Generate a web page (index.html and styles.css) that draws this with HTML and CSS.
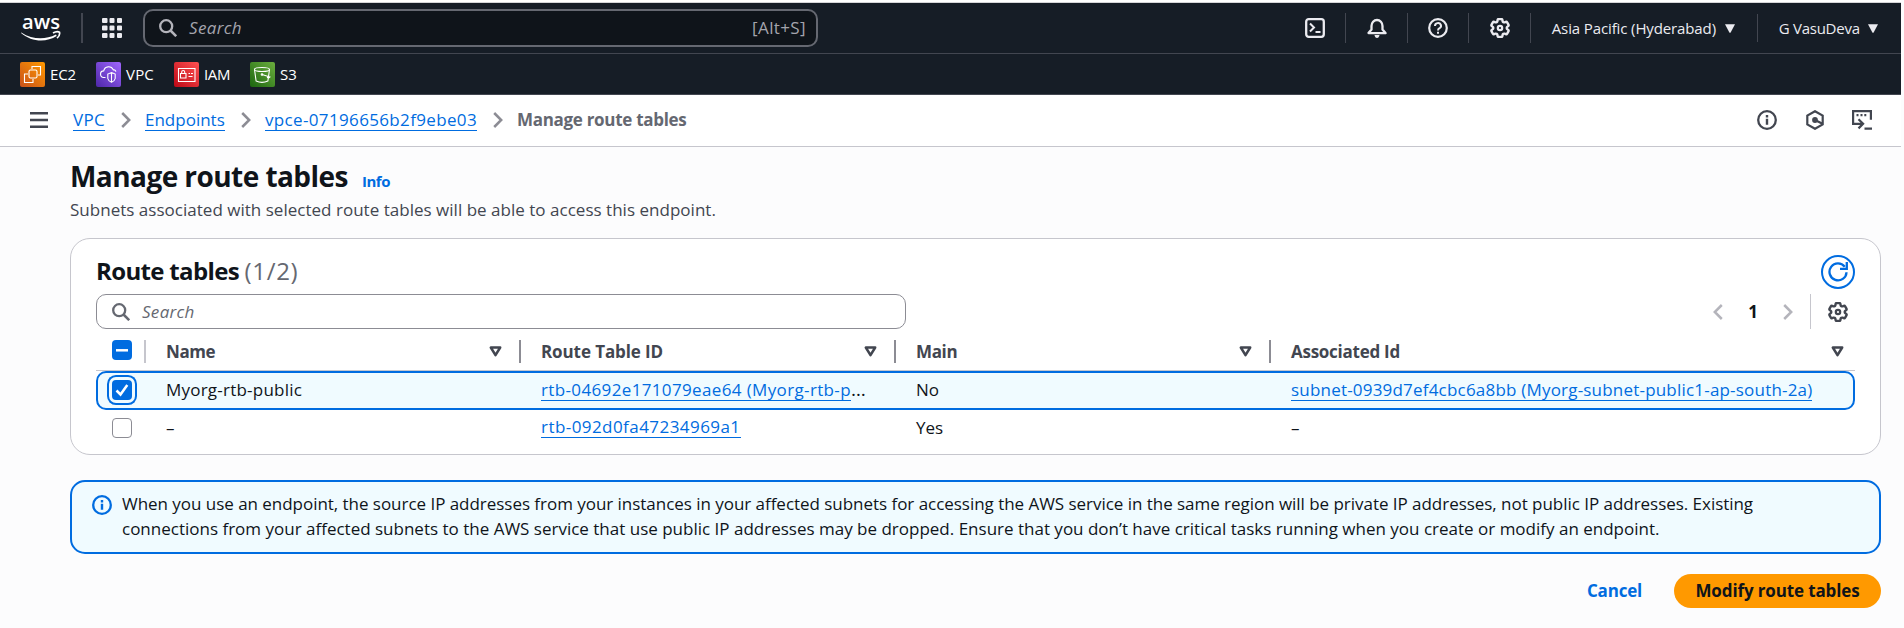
FILE: index.html
```html
<!DOCTYPE html>
<html lang="en">
<head>
<meta charset="utf-8">
<title>Manage route tables</title>
<link rel="stylesheet" href="styles.css">
</head>
<body>
<svg class="defs" width="0" height="0">
  <symbol id="gear" viewBox="2 2 20 20"><path fill="none" stroke="currentColor" stroke-width="2.4" d="M9.594 3.94c.09-.542.56-.94 1.11-.94h2.593c.55 0 1.02.398 1.11.94l.213 1.281c.063.374.313.686.645.87.074.04.147.083.22.127.325.196.72.257 1.075.124l1.217-.456a1.125 1.125 0 0 1 1.37.49l1.296 2.247a1.125 1.125 0 0 1-.26 1.431l-1.003.827c-.293.241-.438.613-.43.992a7.723 7.723 0 0 1 0 .255c-.008.378.137.75.43.991l1.004.827c.424.35.534.955.26 1.43l-1.298 2.247a1.125 1.125 0 0 1-1.369.491l-1.217-.456c-.355-.133-.75-.072-1.076.124a6.47 6.47 0 0 1-.22.128c-.331.183-.581.495-.644.869l-.213 1.281c-.09.543-.56.94-1.11.94h-2.594c-.55 0-1.019-.398-1.11-.94l-.213-1.281c-.062-.374-.312-.686-.644-.87a6.52 6.52 0 0 1-.22-.127c-.325-.196-.72-.257-1.076-.124l-1.217.456a1.125 1.125 0 0 1-1.369-.49l-1.297-2.247a1.125 1.125 0 0 1 .26-1.431l1.004-.827c.292-.24.437-.613.43-.991a6.932 6.932 0 0 1 0-.255c.007-.38-.138-.751-.43-.992l-1.004-.827a1.125 1.125 0 0 1-.26-1.43l1.297-2.247a1.125 1.125 0 0 1 1.37-.491l1.216.456c.356.133.751.072 1.076-.124.072-.044.146-.086.22-.128.332-.183.582-.495.644-.869l.214-1.28Z"/><circle cx="12" cy="12" r="2.2" fill="none" stroke="currentColor" stroke-width="2.2"/></symbol>
  <symbol id="search" viewBox="0 0 18 18"><circle cx="7.2" cy="7.2" r="6" fill="none" stroke="currentColor" stroke-width="2.3"/><path d="M11.5 11.5l5.7 5.7" stroke="currentColor" stroke-width="2.5"/></symbol>
  <symbol id="chev" viewBox="0 0 10 16"><path d="M1.2 1l7 7-7 7" fill="none" stroke="currentColor" stroke-width="2.5"/></symbol>
  <symbol id="info" viewBox="0 0 20 20"><circle cx="10" cy="10" r="8.8" fill="none" stroke="currentColor" stroke-width="2.3"/><path d="M10 8.8v6M10 5v2.4" stroke="currentColor" stroke-width="2.4"/></symbol>
  <symbol id="sort" viewBox="0 0 13 11"><path d="M1.800 1.500h9.400L6.500 9.200z" fill="none" stroke="currentColor" stroke-width="2.500" stroke-linejoin="round"/></symbol>
</svg>
<div class="page">
  <header class="top">
    <svg class="logo" width="40" height="38" viewBox="0 -12 40 38">
      <text x="1" y="13" textLength="38" lengthAdjust="spacingAndGlyphs">aws</text>
      <path d="M.3 16.400c11.500 7.500 24 7.500 34.700 2.100l.7 1.500C25 26.800 10.500 26 0 17z"/>
      <path d="M32 17c2.500-1.500 5.500-1.500 6.500-.8.400 1.800-.7 4.500-2.500 6" fill="none" stroke="#fff" stroke-width="1.700"/>
    </svg>
    <i class="bar bar-wide"></i>
    <svg class="apps" width="20" height="20" viewBox="0 0 20 20"><path d="M0 1q0-1 1-1h3.500q1 0 1 1v3q0 1-1 1H1q-1 0-1-1zM7.500 1q0-1 1-1h3q1 0 1 1v3q0 1-1 1h-3q-1 0-1-1zM15 1q0-1 1-1h3q1 0 1 1v3q0 1-1 1h-3q-1 0-1-1zM0 8.500q0-1 1-1h3.500q1 0 1 1v3q0 1-1 1H1q-1 0-1-1zM7.500 8.500q0-1 1-1h3q1 0 1 1v3q0 1-1 1h-3q-1 0-1-1zM15 8.500q0-1 1-1h3q1 0 1 1v3q0 1-1 1h-3q-1 0-1-1zM0 16q0-1 1-1h3.500q1 0 1 1v3q0 1-1 1H1q-1 0-1-1zM7.500 16q0-1 1-1h3q1 0 1 1v3q0 1-1 1h-3q-1 0-1-1zM15 16q0-1 1-1h3q1 0 1 1v3q0 1-1 1h-3q-1 0-1-1z"/></svg>
    <div class="topsearch"><svg width="18" height="18"><use href="#search"/></svg><em>Search</em><span class="short">[Alt+S]</span></div>
    <div class="tools">
      <svg width="20" height="20" viewBox="0 0 20 20" fill="none" stroke="currentColor" stroke-width="2.300"><rect x="1.200" y="1.200" width="17.600" height="17.600" rx="2.500"/><path d="M5 5.500l4 4-4 4" stroke-width="2"/><path d="M10.500 14h5" stroke-width="2"/></svg>
      <i class="bar"></i>
      <svg width="20" height="20" viewBox="0 0 20 20"><path d="M4.500 8a5.500 6 0 0 1 11 0v3.500l3 3.600h-17l3-3.600z" fill="none" stroke="currentColor" stroke-width="2.300" stroke-linejoin="round"/><path d="M7.500 17h5q-.5 3-2.500 3t-2.500-3z" fill="currentColor"/></svg>
      <i class="bar"></i>
      <svg width="20" height="20" viewBox="0 0 20 20" fill="none" stroke="currentColor" stroke-width="2.200"><circle cx="10" cy="10" r="8.800"/><path d="M7 8a3 2.800 0 1 1 4.600 2.200Q10 11 10 12.500M10 13.800v2" stroke-width="2"/></svg>
      <i class="bar"></i>
      <svg width="20" height="20"><use href="#gear"/></svg>
      <i class="bar"></i>
    </div>
    <span class="region">Asia Pacific (Hyderabad)</span><svg class="caret" width="10" height="9"><path d="M0 .3h10L5.500 8.700h-1z"/></svg>
    <i class="bar bar-user"></i>
    <span class="user">G VasuDeva</span><svg class="caret" width="10" height="9"><path d="M0 .3h10L5.500 8.700h-1z"/></svg>
  </header>
  <nav class="favs">
    <a class="fav fav-ec2"><svg class="ec2" width="25" height="25" viewBox="0 0 25 25"><rect x="9" y="8" width="8" height="8" rx="1.500"/><path d="M12 7V4.500h8.500v8.500H18M8 12H4.500v8.500H13V17"/></svg><span>EC2</span></a>
    <a class="fav fav-vpc"><svg class="vpc" width="25" height="25" viewBox="0 0 25 25"><path d="M9.500 15.500H8a3.300 3.300 0 0 1-.3-6.600c1-5 7.600-5.500 9.600-1 2-.3 2.400 1 2.500 1.800M15.500 10.500l3.700 1.500v4.500q-.5 2.500-3.700 3.800-3.200-1.300-3.700-3.800V12zM15.500 10.500v9.500"/></svg><span>VPC</span></a>
    <a class="fav fav-iam"><svg class="iam" width="25" height="25" viewBox="0 0 25 25"><path d="M4.500 6.500h16.500v13h-16.500zM6.500 11.500h5.500v4.500h-5.500zM7.700 11.500v-1.500a1.500 1.500 0 0 1 3 0v1.500M14.500 11.500h1.500M17 11.500h2M14.500 14.500h4"/></svg><span>IAM</span></a>
    <a class="fav fav-s3"><svg class="s3" width="25" height="25" viewBox="0 0 25 25"><ellipse cx="12" cy="7.500" rx="7.500" ry="2"/><path d="M4.500 7.500l1.600 11.500q5.900 2.800 11.800 0l1.600-11.500M12 12.500l8 2.500q-1 1.500-3 .2"/><circle cx="12" cy="12.500" r=".8"/></svg><span>S3</span></a>
  </nav>
  <div class="crumbs">
    <svg class="menu" width="18" height="16" viewBox="0 0 18 16"><path d="M0 1.200h18M0 8h18M0 14.800h18" stroke="currentColor" stroke-width="2.400"/></svg>
    <a class="link c1">VPC</a><svg class="sep" width="10" height="16"><use href="#chev"/></svg>
    <a class="link c2">Endpoints</a><svg class="sep" width="10" height="16"><use href="#chev"/></svg>
    <a class="link c3">vpce-07196656b2f9ebe03</a><svg class="sep" width="10" height="16"><use href="#chev"/></svg>
    <b class="here">Manage route tables</b>
    <div class="pagetools">
      <svg width="20" height="20"><use href="#info"/></svg>
      <svg width="20" height="20" viewBox="0 0 20 20"><path d="M10 1.200l7.700 4.400v8.800L10 18.800l-7.700-4.400V5.600z" fill="none" stroke="currentColor" stroke-width="2.200"/><circle cx="10" cy="10" r="2.900" fill="currentColor"/><path d="M10 10l7.500 3.700" stroke="currentColor" stroke-width="2.200"/></svg>
      <svg width="20" height="20" viewBox="0 0 20 20" fill="none" stroke="currentColor" stroke-width="2.200"><path d="M4.500 13.800H1.100V1.100h17.800v8.700M4.500 13.800h6M6.500 9.200l4.600 4.600-4.600 4.600M12.500 18.700h7.500"/><path d="M4.500 5.200h2M8.500 5.200h2M12.300 5.200h2"/></svg>
    </div>
  </div>
  <main class="main">
    <div class="title"><h1>Manage route tables</h1><a class="infolink">Info</a></div>
    <p class="desc">Subnets associated with selected route tables will be able to access this endpoint.</p>
    <section class="card">
      <div class="cardhead">
        <h2>Route tables <span>(1/2)</span></h2>
        <button class="refresh"><svg width="20" height="20" viewBox="0 0 20 20" fill="none" stroke="currentColor" stroke-width="2.300"><path d="M18.500 10.200A8.500 8.500 0 1 1 16.800 4.800"/><path d="M18.800 0v6.800h-6.800"/></svg></button>
      </div>
      <div class="filters">
        <div class="search"><svg width="18" height="18"><use href="#search"/></svg><em>Search</em></div>
        <div class="pager">
          <svg class="flip" width="10" height="16"><use href="#chev"/></svg><b>1</b><svg width="10" height="16"><use href="#chev"/></svg>
        </div>
        <svg class="prefs" width="20" height="20"><use href="#gear"/></svg>
      </div>
      <div class="row head">
        <div class="pick"><span class="box on"><svg width="20" height="20"><path d="M4 10.300h12" stroke="#fff" stroke-width="2.500"/></svg></span></div>
        <div class="cell"><b class="h-name">Name</b><svg width="13" height="11"><use href="#sort"/></svg></div>
        <div class="cell"><b class="h-id">Route Table ID</b><svg width="13" height="11"><use href="#sort"/></svg></div>
        <div class="cell"><b class="h-main">Main</b><svg width="13" height="11"><use href="#sort"/></svg></div>
        <div class="cell"><b class="h-assoc">Associated Id</b><svg width="13" height="11"><use href="#sort"/></svg></div>
      </div>
      <div class="row selected">
        <div class="pick"><span class="box on focus"><svg width="20" height="20"><path d="M4.500 10.500l4 4L15.300 5" fill="none" stroke="#fff" stroke-width="2.500"/></svg></span></div>
        <div class="cell"><span class="t-name">Myorg-rtb-public</span></div>
        <div class="cell"><a class="link t-rtb1">rtb-04692e171079eae64 (Myorg-rtb-p</a><span class="dots">…</span></div>
        <div class="cell"><span>No</span></div>
        <div class="cell"><a class="link t-sub">subnet-0939d7ef4cbc6a8bb (Myorg-subnet-public1-ap-south-2a)</a></div>
      </div>
      <div class="row last">
        <div class="pick"><span class="box"></span></div>
        <div class="cell"><span>–</span></div>
        <div class="cell"><a class="link t-rtb2">rtb-092d0fa47234969a1</a></div>
        <div class="cell"><span>Yes</span></div>
        <div class="cell"><span>–</span></div>
      </div>
    </section>
    <div class="alert">
      <svg width="20" height="20"><use href="#info"/></svg>
      <p><span class="a1">When you use an endpoint, the source IP addresses from your instances in your affected subnets for accessing the AWS service in the same region will be private IP addresses, not public IP addresses. Existing</span><br>connections from your affected subnets to the AWS service that use public IP addresses may be dropped. Ensure that you don’t have critical tasks running when you create or modify an endpoint.</p>
    </div>
    <div class="actions"><button class="cancel">Cancel</button><button class="primary">Modify route tables</button></div>
  </main>
</div>
</body>
</html>
```
FILE: styles.css
```css
* { box-sizing: border-box; }
body { margin: 0; background: #fcfcfd; font: 17px/25px "Open Sans", "Noto Sans", sans-serif; color: #0f141a; overflow: hidden; }
svg { display: block; flex: none; }
.defs { position: absolute; }
button { font: inherit; margin: 0; padding: 0; border: 0; background: none; }
h1, h2, p { margin: 0; }
.page { width: 1901px; height: 628px; border-top: 2px solid #fff; }

.top { height: 52px; border-top: 1px solid #d5d5d8; border-bottom: 1px solid #424650; background: #161d26; display: flex; align-items: center; padding-left: 21px; color: #ebebf0; }
.logo { margin-top: -11px; }
.logo text { font: 600 20px "Open Sans", sans-serif; fill: #fff; }
.logo path { fill: #fff; }
.logo path:last-child { fill: none; }
.bar { width: 1px; height: 30px; background: #424650; flex: none; }
.bar-wide { width: 2px; margin-left: 20px; }
.apps { margin-left: 19px; fill: #ebebf0; }
.topsearch { margin-left: 21px; width: 675px; height: 38px; border: 2px solid #656871; border-radius: 10px; background: #0f141a; display: flex; align-items: center; padding: 0 10px 0 14px; color: #b4b4bb; }
.topsearch em { margin: -2px 0 0 12px; color: #a4a4ad; letter-spacing: .35px; }
.short { margin: -2px 0 0 auto; color: #a4a4ad; letter-spacing: .38px; }
.tools { margin-left: 487px; display: flex; align-items: center; gap: 20.250px; }
.region { margin-left: 21px; font-size: 15px; letter-spacing: -.12px; width: 165px; white-space: nowrap; }
.caret { fill: #ebebf0; margin-left: 8px; }
.bar-user { margin-left: 22px; height: 28px; }
.user { margin-left: 21px; font-size: 15px; letter-spacing: -.26px; width: 81px; white-space: nowrap; }

.favs { height: 41px; border-bottom: 1px solid #424650; background: #161d26; display: flex; align-items: center; padding: 0 20px; color: #fff; font-size: 15px; }
.fav { display: flex; align-items: center; gap: 5px; height: 25px; }
.fav span { margin-top: 1px; }
.fav svg { border-radius: 2px; fill: none; stroke: #fff; stroke-width: 1.100; }
.fav-ec2 { width: 76px; letter-spacing: -.12px; }
.fav-vpc { width: 78px; letter-spacing: .2px; }
.fav-iam { width: 76px; letter-spacing: -.39px; }
.ec2 { background: linear-gradient(45deg, #c8511b, #f90); }
.vpc { background: linear-gradient(45deg, #4d27a8, #a166ff); }
.iam { background: linear-gradient(45deg, #bd0816, #ff5252); }
.s3 { background: linear-gradient(45deg, #1b660f, #6cae3e); }

.crumbs { height: 52px; background: #fff; border-bottom: 1px solid #c6c6cd; display: flex; align-items: center; padding: 0 0 1px 30px; color: #424650; }
.link { color: #006ce0; border-bottom: 1px solid #006ce0; line-height: 21px; white-space: nowrap; }
.c1 { margin-left: 25px; width: 32px; letter-spacing: .3px; }
.c2 { width: 80px; }
.c3 { width: 212px; letter-spacing: .35px; }
.sep { color: #8c8c94; margin: 0 14px 0 16px; }
.here { margin-top: -1px; color: #656871; letter-spacing: -.3px; }
.pagetools { margin-left: auto; margin-right: 29px; display: flex; gap: 27.500px; }

.main { padding: 12px 20px 0 70px; }
.title { display: flex; align-items: baseline; height: 36px; }
h1 { font-size: 28px; line-height: 34px; letter-spacing: -.56px; width: 277px; white-space: nowrap; }
.infolink { margin-left: 15px; color: #006ce0; font-weight: 700; font-size: 15px; letter-spacing: -.49px; }
.desc { margin-top: 2px; color: #424650; letter-spacing: .02px; }
.card { margin-top: 16px; height: 217px; border: 1px solid #c6c6cd; border-radius: 20px; background: #fff; padding: 16px 25px 0; }
.cardhead { display: flex; justify-content: space-between; align-items: center; height: 34px; }
h2 { font-size: 24px; letter-spacing: -.66px; margin-top: -3px; }
h2 span { font-weight: 400; color: #656871; letter-spacing: .7px; }
.refresh { width: 34px; height: 34px; border: 2px solid #006ce0; border-radius: 50%; color: #006ce0; display: flex; align-items: center; justify-content: center; }
.filters { display: flex; align-items: center; margin-top: 5px; height: 35px; }
.search { width: 810px; height: 35px; border: 1px solid #8c8c94; border-radius: 10px; display: flex; align-items: center; padding-left: 15px; color: #656871; }
.search em { margin: -1px 0 0 12px; letter-spacing: .3px; }
.pager { margin-left: auto; height: 35px; border-right: 1px solid #c6c6cd; padding-right: 17px; display: flex; align-items: center; gap: 25px; color: #b4b4bb; }
.pager b { color: #0f141a; }
.flip { transform: scaleX(-1); }
.prefs { margin: 0 7px 0 17px; color: #424650; }

.row { display: grid; grid-template-columns: 50px 375px 375px 375px 1fr; align-items: center; }
.head { height: 42px; border-bottom: 1px solid #c6c6cd; color: #424650; padding-top: 3px; }
.pick { padding-left: 16px; display: flex; align-items: center; }
.cell { padding-left: 20px; display: flex; align-items: center; white-space: nowrap; }
.row:not(.head) .cell > * { margin-top: -2px; }
.head .pick, .head .cell { height: 23px; border-right: 2px solid #8c8c94; }
.head .pick { border-color: #c6c6cd; }
.head .box { margin-top: -3px; }
.head .cell { justify-content: space-between; padding-right: 17px; }
.head .cell:last-child { border: 0; padding-right: 11px; }
.h-name { letter-spacing: -.42px; }
.h-id { letter-spacing: -.1px; }
.h-main { letter-spacing: -.35px; }
.h-assoc { letter-spacing: -.26px; }
.box { width: 20px; height: 20px; border: 1px solid #8c8c94; border-radius: 4px; background: #fff; }
.on { border: 0; background: #006ce0; }
.focus { margin-top: -1px; box-shadow: 0 0 0 3px #f0fbff, 0 0 0 5px #006ce0; }
.selected { height: 39px; border: 2px solid #006ce0; border-radius: 10px; background: #f0fbff; grid-template-columns: 48px 375px 375px 375px 1fr; }
.selected .pick { padding-left: 14px; }
.t-name { letter-spacing: .22px; }
.t-rtb1 { letter-spacing: .36px; }
.dots { letter-spacing: 1px; font-size: 19px; }
.t-sub { letter-spacing: .2px; }
.t-rtb2 { letter-spacing: .44px; }
.last { height: 36px; }

.alert { margin-top: 25px; height: 74px; border: 2px solid #006ce0; border-radius: 15px; background: #f0fbff; padding: 9px 0 0 20px; display: flex; gap: 10px; white-space: nowrap; }
.alert svg { color: #006ce0; margin-top: 4px; }
.a1 { letter-spacing: -.035px; }
.actions { margin-top: 20px; display: flex; justify-content: flex-end; align-items: center; }
.actions button { font-weight: 700; padding-bottom: 2px; }
.cancel { color: #006ce0; letter-spacing: -.2px; }
.actions .cancel { margin-right: 32px; }
.primary { width: 207px; height: 34px; border-radius: 17px; background: #f90; color: #0f141a; letter-spacing: -.13px; }
```
